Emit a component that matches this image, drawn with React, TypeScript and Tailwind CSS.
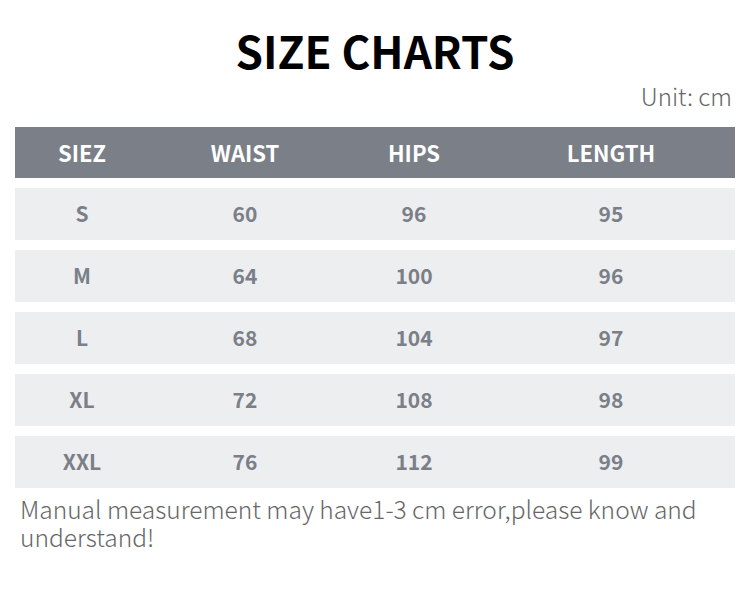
const rows = [
  ['S', '60', '96', '95'],
  ['M', '64', '100', '96'],
  ['L', '68', '104', '97'],
  ['XL', '72', '108', '98'],
  ['XXL', '76', '112', '99'],
]

const cols = 'grid grid-cols-[134px_192px_146px_248px] items-center text-center'

export default function App() {
  return (
    <div className="w-[750px] h-[600px] bg-white font-['Noto_Sans_CJK_SC',sans-serif]">
      <h1 className="pt-[22px] text-center text-[44px] leading-[56px] font-bold text-black">SIZE CHARTS</h1>
      <div className="mt-[3px] pr-[18px] text-right text-[24px] leading-[30px] font-light text-[#666]">Unit: cm</div>
      <div className="mx-[15px] mt-[16px] flex flex-col gap-[10px]">
        <div className={`${cols} h-[51px] bg-[#7a7f88] text-[22px] font-bold text-white`}>
          <div>SIEZ</div>
          <div>WAIST</div>
          <div>HIPS</div>
          <div>LENGTH</div>
        </div>
        {rows.map(r => (
          <div key={r[0]} className={`${cols} h-[52px] bg-[#edeef0] text-[21px] font-bold text-[#7a7f88]`}>
            {r.map((c, i) => <div key={i}>{c}</div>)}
          </div>
        ))}
      </div>
      <p className="mt-[7px] px-[20px] text-[24.5px] leading-[28px] font-light text-[#666]">
        Manual measurement may have1-3 cm error,please know and understand!
      </p>
    </div>
  )
}
